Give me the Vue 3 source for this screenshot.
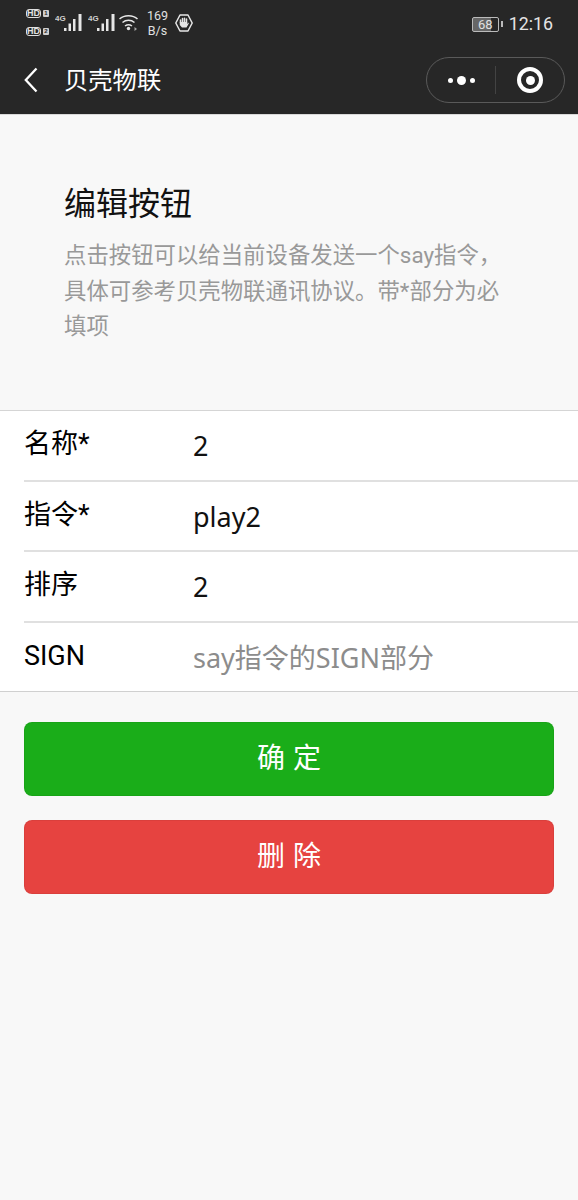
<script setup>
const rows = [
  { label: '名称*', value: '2' },
  { label: '指令*', value: 'play2' },
  { label: '排序', value: '2' },
  { label: 'SIGN', value: 'say指令的SIGN部分', placeholder: true },
]
</script>

<template>
  <div class="page">
    <header class="top">
      <div class="status">
        <div class="status-left">
          <div class="sims">
            <div class="sim"><span class="hd">HD</span><span class="simno">1</span></div>
            <div class="sim"><span class="hd">HD</span><span class="simno">2</span></div>
          </div>
          <svg class="signal" width="27" height="18" viewBox="0 0 27 18">
            <text x="0" y="7" class="tiny">4G</text>
            <rect x="9" y="14" width="2.500" height="3" fill="#e6e6e6" />
            <rect x="13.500" y="9.500" width="2.500" height="7.500" fill="#e6e6e6" />
            <rect x="18" y="5" width="2.500" height="12" fill="#e6e6e6" />
            <rect x="23.500" y="0" width="3" height="17" fill="#e6e6e6" />
          </svg>
          <svg class="signal" width="27" height="18" viewBox="0 0 27 18">
            <text x="0" y="7" class="tiny">4G</text>
            <rect x="9" y="14" width="2.500" height="3" fill="#e6e6e6" />
            <rect x="13.500" y="9.500" width="2.500" height="7.500" fill="#e6e6e6" />
            <rect x="18" y="5" width="2.500" height="12" fill="#e6e6e6" />
            <rect x="23.500" y="0" width="3" height="17" fill="#e6e6e6" />
          </svg>
          <svg class="wifi" width="21" height="18" viewBox="0 0 21 18" fill="none" stroke="#e6e6e6" stroke-width="1.500">
            <path d="M0.500 5 C5 0.500 14 0.500 18.500 5" />
            <path d="M3.500 8.500 C7 5.500 12 5.500 15.500 8.500" />
            <path d="M6 12 C8 10.500 11 10.500 13 12" />
            <circle cx="9.500" cy="14.500" r="1.700" fill="#e6e6e6" stroke="none" />
            <path d="M15.500 13 L18 15 L15.500 17 Z" fill="#aaa" stroke="none" />
          </svg>
          <div class="speed"><span>169</span><span>B/s</span></div>
          <svg class="hand" width="18" height="18" viewBox="0 0 18 18">
            <path d="M5 1 H13 L17.200 9 L13 17 H5 L0.800 9 Z" fill="none" stroke="#e6e6e6" stroke-width="1.500" stroke-linejoin="round" />
            <path d="M5.500 9 V6 M7.500 8 V4.500 M9.500 8 V4.200 M11.500 8 V5" fill="none" stroke="#e6e6e6" stroke-width="1.500" stroke-linecap="round" />
            <path d="M4.800 8 H12.300 V10 L13.600 8.500 L13.800 9.500 L11.500 13.500 H7 L4.800 11 Z" fill="#e6e6e6" />
          </svg>
        </div>
        <div class="status-right">
          <div class="battery"><span class="bat-box">68</span><span class="bat-tip"></span></div>
          <span class="time">12:16</span>
        </div>
      </div>
      <nav class="nav">
        <svg class="back" width="14" height="26" viewBox="0 0 14 26" fill="none" stroke="#fff" stroke-width="2.300">
          <path d="M12.500 1.500 L1.800 13 L12.500 24.500" />
        </svg>
        <span class="nav-title">贝壳物联</span>
        <div class="capsule">
          <div class="cap-cell">
            <i class="dot small"></i><i class="dot big"></i><i class="dot small"></i>
          </div>
          <span class="cap-sep"></span>
          <div class="cap-cell">
            <span class="ring"><i></i></span>
          </div>
        </div>
      </nav>
    </header>

    <section class="intro">
      <h1>编辑按钮</h1>
      <p>点击按钮可以给当前设备发送一个say指令，具体可参考贝壳物联通讯协议。带*部分为必填项</p>
    </section>

    <div class="cells">
      <div v-for="row in rows" :key="row.label" class="cell">
        <span class="label">{{ row.label }}</span>
        <span class="value" :class="{ placeholder: row.placeholder }">{{ row.value }}</span>
      </div>
    </div>

    <div class="actions">
      <button class="btn primary">确 定</button>
      <button class="btn danger">删 除</button>
    </div>
  </div>
</template>

<style>
html, body { margin: 0; background: #f8f8f8; }
</style>

<style scoped>
.page {
  width: 578px;
  height: 1200px;
  overflow: hidden;
  background: #f8f8f8;
  font-family: Roboto, "Noto Sans CJK SC", sans-serif;
  color: #000;
}
.top { background: #272727; height: 114px; border-bottom: 1px solid #d9d9d9; }
.status {
  height: 48px;
  display: flex;
  justify-content: space-between;
  align-items: center;
  padding: 0 25px 0 26px;
  color: #e0e0e0;
}
.status-left { display: flex; align-items: center; margin-bottom: 3px; }
.sims { display: flex; flex-direction: column; gap: 9px; width: 29px; }
.sim { display: flex; align-items: center; gap: 2px; }
.hd {
  font: 700 9px/7px "Liberation Sans", sans-serif;
  border: 1px solid #e0e0e0;
  border-radius: 3px;
  width: 13px;
  height: 7px;
  text-align: center;
  box-sizing: content-box;
}
.simno {
  width: 6px;
  height: 7px;
  background: #d0d0d0;
  color: #272727;
  font: 700 6px/7px "Liberation Sans", sans-serif;
  text-align: center;
  border-radius: 1px;
}
.signal { margin-right: 6px; display: block; }
.tiny { font: 700 8px "Liberation Sans", sans-serif; fill: #d0d0d0; }
.wifi { margin-left: -2px; display: block; }
.speed {
  display: flex;
  flex-direction: column;
  align-items: center;
  width: 21px;
  margin-left: 7px;
  font: 12.500px/15px Roboto, sans-serif;
}
.hand { margin-left: 7px; display: block; }
.status-right { display: flex; align-items: center; }
.battery { display: flex; align-items: center; }
.bat-box {
  width: 25px;
  height: 13px;
  border: 1px solid #bbb;
  border-radius: 2px;
  background: linear-gradient(90deg, #666 70%, #272727 70%);
  font: 13px/13px Roboto, sans-serif;
  text-align: center;
  color: #e0e0e0;
}
.bat-tip { width: 2px; height: 6px; background: #bbb; margin-left: 2px; }
.time { font: 17.800px/22px Roboto, sans-serif; margin-left: 6px; color: #e4e4e4; }
.nav { height: 66px; box-sizing: border-box; display: flex; align-items: center; padding: 0 13px 2px 24px; }
.back { display: block; }
.nav-title { margin-left: 26px; padding-top: 2px; color: #fff; font-size: 24.300px; line-height: 32px; }
.capsule {
  margin-left: auto;
  width: 139px;
  height: 46px;
  box-sizing: border-box;
  border: 1px solid #5a5a5a;
  border-radius: 23px;
  display: flex;
  align-items: center;
}
.cap-cell { flex: 1; display: flex; align-items: center; justify-content: center; gap: 4px; }
.cap-sep { width: 1px; height: 28px; background: #434343; }
.dot { display: block; border-radius: 50%; background: #fff; }
.dot.small { width: 5px; height: 5px; }
.dot.big { width: 9px; height: 9px; }
.ring {
  width: 26px;
  height: 26px;
  box-sizing: border-box;
  border: 4px solid #fff;
  border-radius: 50%;
  display: flex;
  align-items: center;
  justify-content: center;
}
.ring i { display: block; width: 9px; height: 9px; border-radius: 50%; background: #fff; }
.intro { padding: 67px 64px 0; height: 295px; box-sizing: border-box; }
.intro h1 { margin: 0; font-size: 32px; line-height: 44px; font-weight: 400; color: #111; }
.intro p { margin: 12px 0 0; font-size: 22.400px; line-height: 35.500px; color: #999; width: 440px; }
.cells { background: #fff; border-top: 1px solid #d5d5d5; border-bottom: 1px solid #d0d0d0; }
.cell {
  margin-left: 24px;
  height: 70px;
  box-sizing: border-box;
  display: flex;
  border-top: 2px solid #e0e0e0;
}
.cell:first-child { border-top: 0; height: 69px; }
.cell:nth-child(3) { height: 71px; }
.label { width: 169px; font-size: 27px; line-height: 38px; padding-top: 14px; }
.value { font-family: "Noto Sans", "Noto Sans CJK SC", sans-serif; font-size: 27px; line-height: 40px; padding-top: 15px; color: #111; }
.value.placeholder { color: #8c8c8c; }
.actions { padding: 30px 24px 0; display: flex; flex-direction: column; gap: 24px; }
.btn {
  height: 74px;
  border: 1px solid rgba(0, 0, 0, 0.05);
  border-radius: 8px;
  color: #fff;
  font: 400 28px/1 "Noto Sans CJK SC", sans-serif;
  word-spacing: 1.500px;
  padding: 0 0 7px;
  box-sizing: border-box;
}
.primary { background: #1aad19; }
.danger { background: #e64340; }
</style>
